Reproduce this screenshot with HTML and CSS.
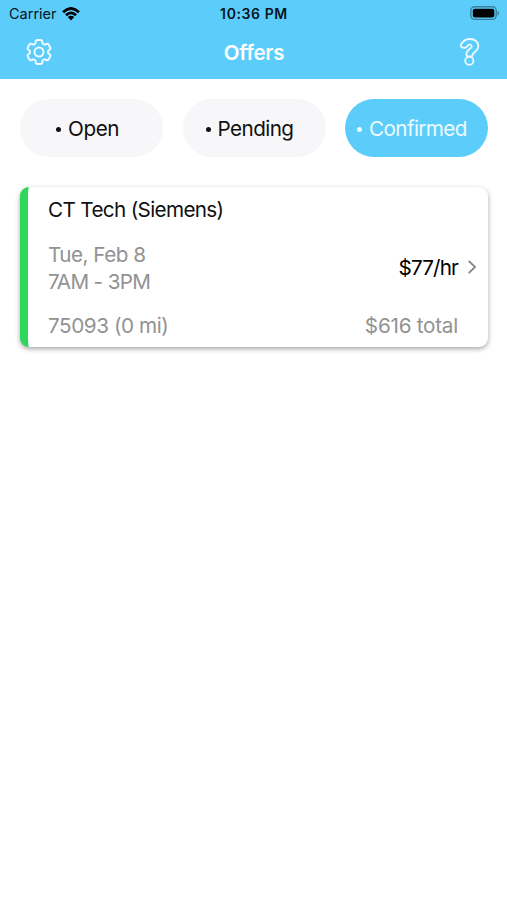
FILE: index.html
```html
<!DOCTYPE html>
<html lang="en">
<head>
<meta charset="utf-8">
<title>Offers</title>
<link rel="stylesheet" href="styles.css">
</head>
<body>
<header class="header">
  <div class="status">
    <div class="network"><span class="carrier">Carrier</span>
      <svg class="wifi" viewBox="0 0 18 14"><path d="M1.1 5.2Q9-2.3 16.9 5.2M4 8.2Q9 3.6 14 8.2"/><path class="solid" d="M5.8 10Q9 7.5 12.2 10L9 13.4Z"/></svg>
    </div>
    <span class="time">10:36 PM</span>
    <svg class="battery" viewBox="0 0 31 15"><rect class="case" x=".8" y=".8" width="25.4" height="12.6" rx="3.8"/><rect x="2.8" y="2.7" width="21.5" height="8.8" rx="2"/><path class="tip" d="M27.5 4.5Q30.5 7.1 27.5 9.7Z"/></svg>
  </div>
  <nav class="nav">
    <svg class="gear" viewBox="0 0 24 24"><path d="M9.594 3.94c.09-.542.56-.94 1.11-.94h2.593c.55 0 1.02.398 1.11.94l.213 1.281c.063.374.313.686.645.87.074.04.147.083.22.127.325.196.72.257 1.075.124l1.217-.456a1.125 1.125 0 0 1 1.37.49l1.296 2.247a1.125 1.125 0 0 1-.26 1.431l-1.003.827c-.293.241-.438.613-.43.992a7.723 7.723 0 0 1 0 .255c-.008.378.137.75.43.991l1.004.827c.424.35.534.955.26 1.43l-1.298 2.247a1.125 1.125 0 0 1-1.369.491l-1.217-.456c-.355-.133-.75-.072-1.076.124a6.47 6.47 0 0 1-.22.128c-.331.183-.581.495-.644.869l-.213 1.281c-.09.543-.56.94-1.11.94h-2.594c-.55 0-1.019-.398-1.11-.94l-.213-1.281c-.062-.374-.312-.686-.644-.87a6.52 6.52 0 0 1-.22-.127c-.325-.196-.72-.257-1.076-.124l-1.217.456a1.125 1.125 0 0 1-1.369-.49l-1.297-2.247a1.125 1.125 0 0 1 .26-1.431l1.004-.827c.292-.24.437-.613.43-.991a6.932 6.932 0 0 1 0-.255c.007-.38-.138-.751-.43-.992l-1.004-.827a1.125 1.125 0 0 1-.26-1.43l1.297-2.247a1.125 1.125 0 0 1 1.37-.491l1.216.456c.356.133.751.072 1.076-.124.072-.044.146-.086.22-.128.332-.183.582-.495.644-.869l.214-1.28Z"/><circle cx="12" cy="12" r="3.4"/></svg>
    <h1 class="title">Offers</h1>
    <svg class="help" viewBox="0 0 22 30"><path d="M2 7.4C4.2 3.6 7 2 11 2C16 2 19.3 5 19.3 9C19.3 12.4 17.3 14 15.2 15.5C13.9 16.5 13.6 17 13.5 18.2C13.2 20.3 7.3 20.2 7.3 17.2C7.3 14.6 8.6 13.3 10.8 11.7C12.8 10.3 13.2 9.1 12.2 8.2C11 7.1 9.2 7.5 8 9.4C6.3 12.2 .6 10.6 2 7.4Z"/><circle cx="10.3" cy="23.8" r="4.1"/></svg>
  </nav>
</header>
<main class="content">
  <div class="tabs">
    <div class="tab open"><i class="dot"></i><span>Open</span></div>
    <div class="tab pending"><i class="dot"></i><span>Pending</span></div>
    <div class="tab confirmed"><i class="dot"></i><span>Confirmed</span></div>
  </div>
  <article class="card">
    <div class="details">
      <h2 class="job">CT Tech (Siemens)</h2>
      <p class="when"><span class="date">Tue, Feb 8</span><br><span class="hours">7AM - 3PM</span></p>
      <p class="place">75093 (0 mi)</p>
    </div>
    <div class="pay"><span class="rate">$77/hr</span><span class="total">$616 total</span></div>
    <svg class="chevron" viewBox="0 0 9 14"><path d="M1.2 1.4L7 7L1.2 12.6"/></svg>
  </article>
</main>
</body>
</html>
```
FILE: styles.css
```css
* { box-sizing: border-box; }
body { margin: 0; min-height: 100vh; background: #fff; color: #111; font: 20.7px/27px Inter, "Liberation Sans", sans-serif; }
h1, h2, p { margin: 0; }
svg { display: block; fill: none; stroke-linecap: round; stroke-linejoin: round; }
.header { height: 79px; background: #5ccdfb; }
.status { height: 27px; padding: 0 6px 0 9px; display: grid; grid-template-columns: 1fr auto 1fr; align-items: center; font-size: 14.5px; color: #08151b; }
.network { display: flex; align-items: center; gap: 5px; }
.wifi { width: 18px; height: 14px; stroke: #000; stroke-width: 2.8; stroke-linecap: butt; }
.wifi .solid { fill: #000; stroke: none; }
.time { font-weight: 600; font-size: 14px; letter-spacing: .6px; margin-right: 2px; }
.battery { width: 31px; height: 15px; justify-self: end; fill: #000; }
.battery .case { fill: none; stroke: #397f9b; stroke-width: 1.4; }
.battery .tip { fill: #397f9b; }
.nav { height: 50px; display: grid; grid-template-columns: 1fr auto 1fr; align-items: center; padding: 0 26px 0 23px; color: #fff; }
.gear { width: 32px; height: 32px; stroke: #eefaff; stroke-width: 1.5; }
.title { font-size: 20.5px; line-height: 27px; font-weight: 600; letter-spacing: -.2px; margin-left: 4px; }
.help { width: 22px; height: 30px; justify-self: end; stroke: #eefaff; stroke-width: 1.8; }
.content { padding: 20px 19px 0 20px; }
.tabs { display: flex; justify-content: space-between; }
.tab { width: 143px; height: 58px; border-radius: 29px; background: #f7f7fa; display: flex; align-items: center; gap: 8px; }
.open { padding-left: 36px; letter-spacing: -.4px; }
.pending { padding-left: 23px; letter-spacing: -.57px; }
.confirmed { padding-left: 12px; letter-spacing: -.62px; color: #edfaff; background: #5ccdfb; }
.dot { width: 5px; height: 5px; margin-right: -1px; position: relative; top: 1px; border-radius: 50%; background: currentColor; }
.card { margin-top: 30px; height: 160px; border-radius: 9px; border-left: 8px solid #2cd759; background: #fff; display: flex; padding: 9px 11px 8px 20px; box-shadow: 0 2px 5px rgba(0,0,0,.35); }
.details { flex: 1; color: #929292; }
.job { font: inherit; color: #111; letter-spacing: -.66px; }
.when { margin-top: 18px; }
.date { letter-spacing: -.52px; }
.hours { letter-spacing: -.66px; }
.place { margin-top: 17px; letter-spacing: -.43px; }
.pay { display: flex; flex-direction: column; align-items: flex-end; padding-top: 58px; gap: 31px; }
.rate { color: #000; letter-spacing: -.85px; }
.total { color: #929292; letter-spacing: -.25px; }
.chevron { width: 9px; height: 14px; margin: 64px 0 0 10px; stroke: #858585; stroke-width: 1.8; }
```
